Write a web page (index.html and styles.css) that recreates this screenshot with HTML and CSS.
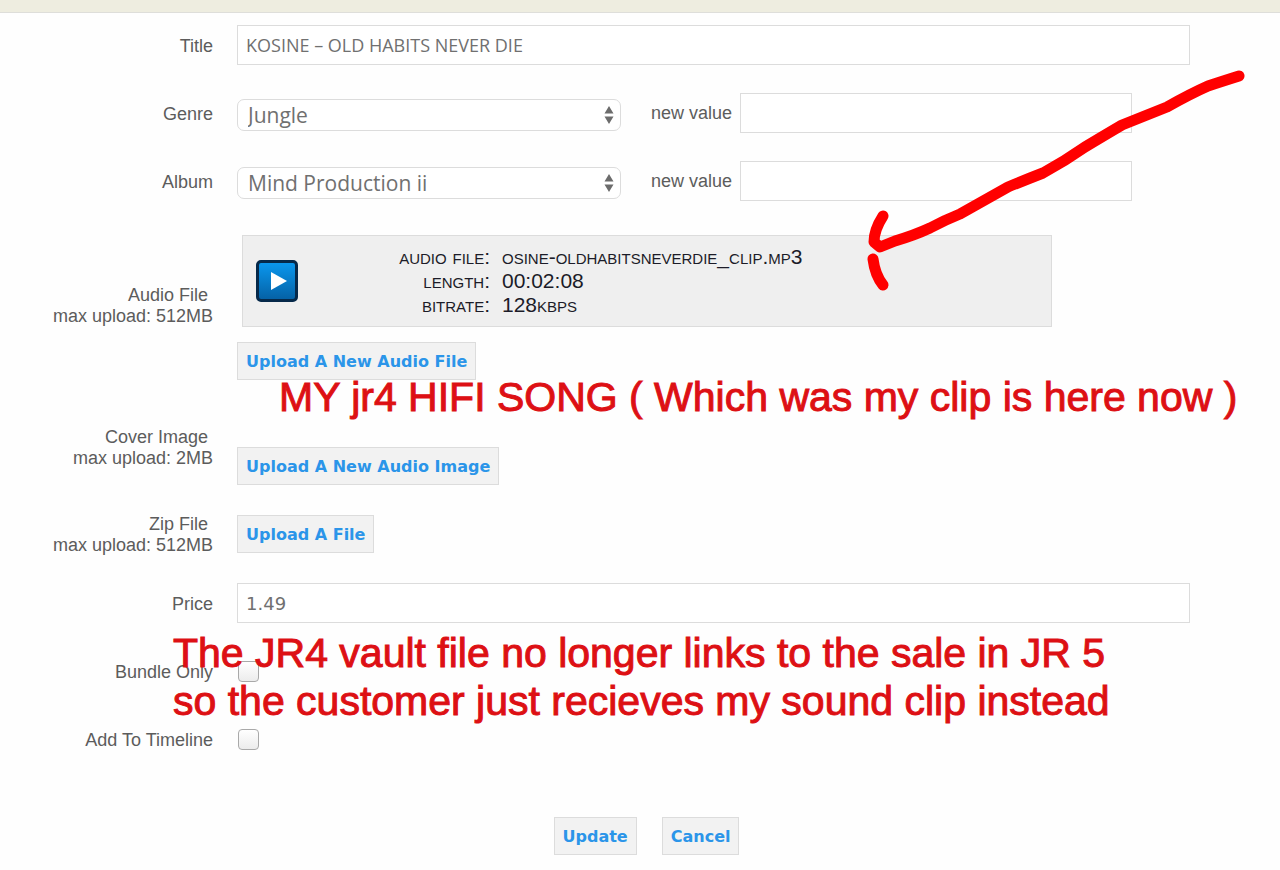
FILE: index.html
```html
<!DOCTYPE html>
<html lang="en">
<head>
    <meta charset="UTF-8">
    <meta name="viewport" content="width=device-width, initial-scale=1.0">
    <title>Update Audio</title>
    <link rel="stylesheet" href="styles.css">
</head>
<body>

    <div class="topbar"></div>

    <form class="audio-form" onsubmit="return false">
        <div class="row">
            <label class="name" for="title">Title</label>
            <input class="text" type="text" id="title" value="KOSINE – OLD HABITS NEVER DIE">
        </div>

        <div class="row">
            <label class="name" for="genre">Genre</label>
            <div class="choice">
                <div class="select">
                    <select id="genre"><option>Jungle</option></select>
                    <svg class="arrows" viewBox="0 0 10 20"><path d="M5 1L9.500 8.500H.5zM5 19L.5 11.500H9.500z"/></svg>
                </div>
                <label for="new-genre">new value</label>
                <input class="text" type="text" id="new-genre">
            </div>
        </div>

        <div class="row">
            <label class="name" for="album">Album</label>
            <div class="choice">
                <div class="select">
                    <select id="album"><option>Mind Production ii</option></select>
                    <svg class="arrows" viewBox="0 0 10 20"><path d="M5 1L9.500 8.500H.5zM5 19L.5 11.500H9.500z"/></svg>
                </div>
                <label for="new-album">new value</label>
                <input class="text" type="text" id="new-album">
            </div>
        </div>

        <div class="row">
            <div class="name">Audio File&nbsp;<br>max upload: 512MB</div>
            <div class="audio">
                <div class="player">
                    <button class="play" type="button" aria-label="Play">
                        <svg viewBox="0 0 16 18"><path d="M0 0L16 9L0 18z"/></svg>
                    </button>
                    <table class="info">
                        <tr><th>audio file:</th><td>osine-oldhabitsneverdie_clip.mp3</td></tr>
                        <tr><th>length:</th><td>00:02:08</td></tr>
                        <tr><th>bitrate:</th><td>128kbps</td></tr>
                    </table>
                </div>
                <button class="btn" type="button">Upload A New Audio File</button>
            </div>
        </div>

        <div class="row">
            <div class="name">Cover Image&nbsp;<br>max upload: 2MB</div>
            <div class="cover">
                <button class="btn" type="button">Upload A New Audio Image</button>
            </div>
        </div>

        <div class="row">
            <div class="name">Zip File&nbsp;<br>max upload: 512MB</div>
            <div><button class="btn" type="button">Upload A File</button></div>
        </div>

        <div class="row">
            <label class="name" for="price">Price</label>
            <input class="text price" type="text" id="price" value="1.49">
        </div>

        <div class="row">
            <label class="name" for="bundle">Bundle Only</label>
            <input class="check" type="checkbox" id="bundle">
        </div>

        <div class="row">
            <label class="name" for="timeline">Add To Timeline</label>
            <input class="check" type="checkbox" id="timeline">
        </div>

        <div class="actions">
            <button class="btn" type="submit">Update</button>
            <button class="btn" type="button">Cancel</button>
        </div>
    </form>

    <!-- red notes over the form -->
    <svg class="arrow" viewBox="860 60 400 240">
        <path d="M1239 76Q1220 82 1208 86Q1190 94 1167 107L1122 125Q1105 135 1085 147Q1065 161 1043 173Q1025 180 1008 187L960 214Q945 220 930 228Q915 235 895 241L880 247L874 242Q874 230 883 216"/>
        <path d="M873 259Q875 275 883 285"/>
    </svg>
    <p class="note note-song">MY jr4 HIFI SONG ( Which was my clip is here now )</p>
    <p class="note note-vault">The JR4 vault file no longer links to the sale in JR 5<br>so the customer just recieves my sound clip instead</p>

</body>
</html>
```
FILE: styles.css
```css
body {
    position: relative;
    margin: 0;
    background: #fefefe;
    color: #5c5c5c;
    font-family: "Liberation Sans", Arial, sans-serif;
    font-size: 18px;
    line-height: 21px;
}
.topbar {
    height: 12px;
    background: #eeede0;
    border-bottom: 1px solid #dededa;
}
.audio-form {
    display: flex;
    flex-direction: column;
    gap: 28px;
    padding: 12px 90px 14px 0;
}
.row {
    display: grid;
    grid-template-columns: 213px 1fr;
    column-gap: 24px;
    align-items: center;
    min-height: 40px;
}
.name {
    margin: 1px 0 -1px;
    text-align: right;
}

/* fields */
input, select, button {
    box-sizing: border-box;
    margin: 0;
    font-family: "Open Sans", sans-serif;
    font-weight: 500;
}
.text {
    width: 100%;
    height: 40px;
    padding: 0 8px;
    border: 1px solid #dcdcdc;
    background: #fff;
    color: #707070;
    font-size: 18px;
}
.price {
    font-family: "DejaVu Sans", sans-serif;
}
.choice {
    display: grid;
    grid-template-columns: 384px auto 392px;
    align-items: center;
    justify-content: start;
}
.choice label {
    padding: 0 8px 0 30px;
}
.select {
    position: relative;
    padding-top: 4px;
}
.select select {
    display: block;
    width: 100%;
    height: 32px;
    padding: 0 10px;
    border: 1px solid #dcdcdc;
    border-radius: 7px;
    background: #fff;
    color: #707070;
    font-size: 21px;
    appearance: none;
}
.arrows {
    position: absolute;
    right: 7px;
    top: 10px;
    width: 10px;
    height: 20px;
    fill: #6c6c6c;
}
.check {
    width: 21px;
    height: 21px;
    margin-left: 1px;
    border: 1px solid #a9a9a9;
    border-radius: 4px;
    background: linear-gradient(#fff, #ececec);
    appearance: none;
}

/* audio player */
.audio {
    padding-top: 6px;
}
.player {
    display: flex;
    align-items: center;
    box-sizing: border-box;
    width: 810px;
    height: 92px;
    margin: 0 0 15px 5px;
    padding-left: 13px;
    border: 1px solid #dcdcdc;
    background: #efefef;
}
.play {
    display: flex;
    align-items: center;
    justify-content: center;
    width: 42px;
    height: 42px;
    padding: 0 0 0 4px;
    border: 3px solid #06294a;
    border-radius: 5px;
    background: linear-gradient(#0a97ee, #0562a6);
}
.play svg {
    width: 16px;
    height: 18px;
    fill: #fff;
}
.info {
    border-collapse: collapse;
    color: #1c1c28;
    font-size: 21px;
    font-variant: small-caps;
    line-height: 24px;
}
.info th {
    width: 192px;
    padding: 0 12px 0 0;
    font-weight: normal;
    text-align: right;
}
.info td {
    padding: 0;
}

/* buttons */
.btn {
    height: 38px;
    padding: 0 8px;
    border: 1px solid #dcdcdc;
    background: #f2f2f2;
    color: #2b95e9;
    font-family: "DejaVu Sans", Verdana, sans-serif;
    font-size: 16px;
    font-weight: bold;
}
.cover {
    padding-top: 39px;
}
.actions {
    display: flex;
    justify-content: center;
    gap: 25px;
    margin: 30px 0 0 103px;
}

/* notes */
.note {
    position: absolute;
    margin: 0;
    color: #dd1014;
    font-size: 41px;
    line-height: 48px;
    white-space: nowrap;
    -webkit-text-stroke: 1px #dd1014;
}
.note-song {
    left: 279px;
    top: 373px;
}
.note-vault {
    left: 173px;
    top: 629px;
}
.arrow {
    position: absolute;
    left: 860px;
    top: 60px;
    width: 400px;
    height: 240px;
    fill: none;
    stroke: #f00;
    stroke-width: 11px;
    stroke-linecap: round;
    stroke-linejoin: round;
    pointer-events: none;
}
```
